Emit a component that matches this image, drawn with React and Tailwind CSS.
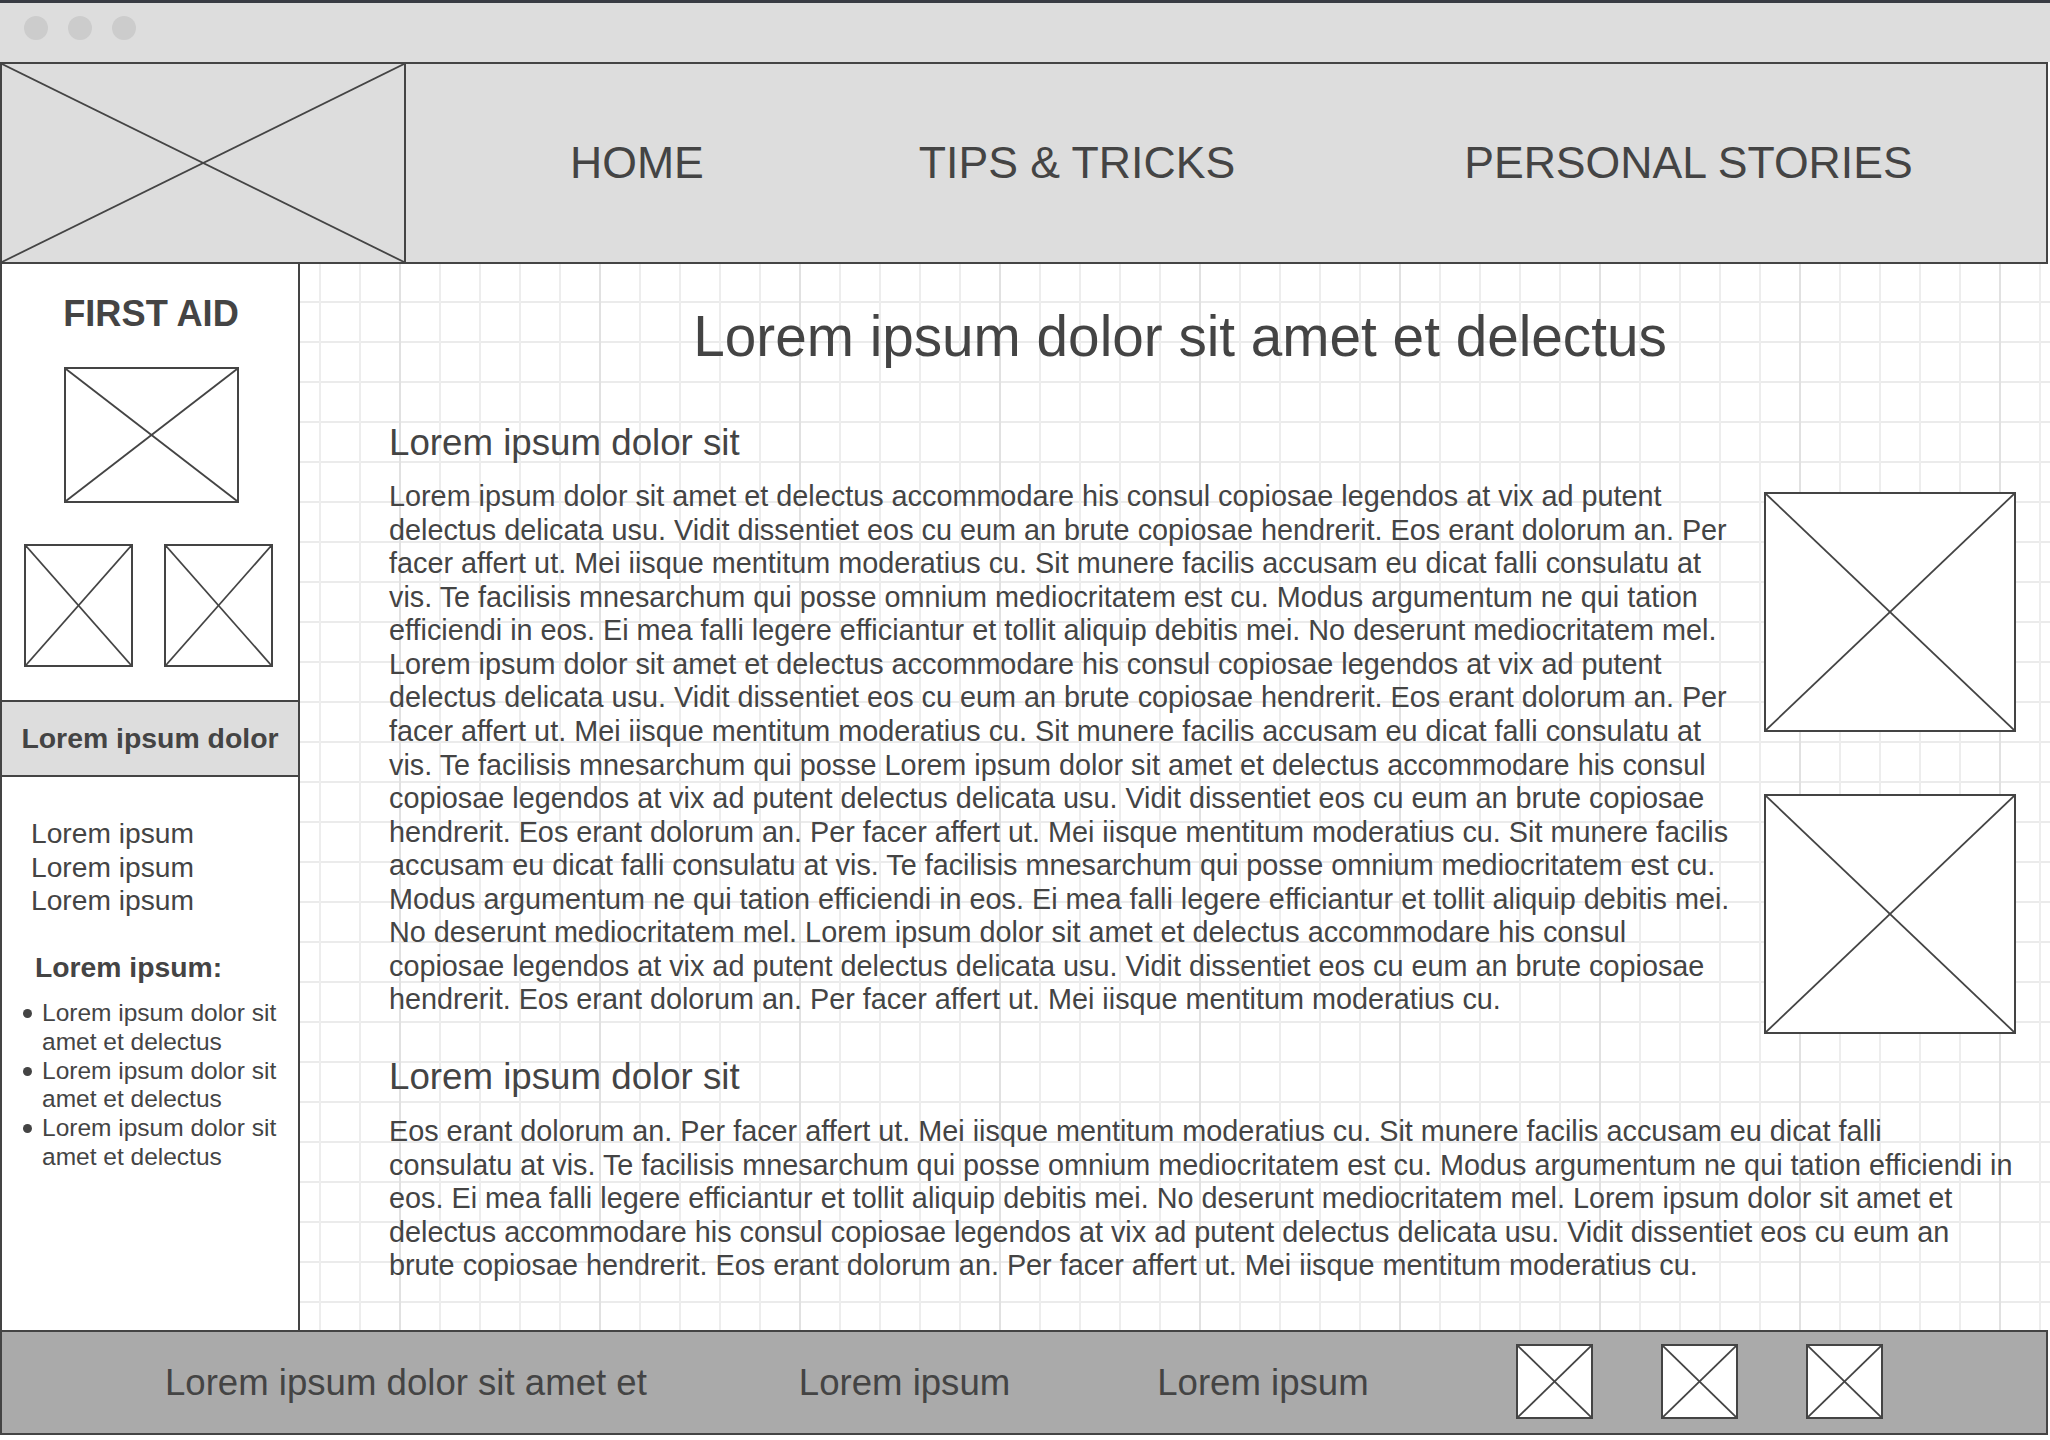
import React from 'react';

const XBox = ({ className = '' }) => (
    <div className={`border-2 border-[#444] ${className}`}>
        <svg className="block w-full h-full" viewBox="0 0 100 100" preserveAspectRatio="none">
            <line x1="0" y1="0" x2="100" y2="100" stroke="#444" strokeWidth="1.8" vectorEffect="non-scaling-stroke" />
            <line x1="100" y1="0" x2="0" y2="100" stroke="#444" strokeWidth="1.8" vectorEffect="non-scaling-stroke" />
        </svg>
    </div>
);

const para1 = `Lorem ipsum dolor sit amet et delectus accommodare his consul copiosae legendos at vix ad putent
delectus delicata usu. Vidit dissentiet eos cu eum an brute copiosae hendrerit. Eos erant dolorum an. Per
facer affert ut. Mei iisque mentitum moderatius cu. Sit munere facilis accusam eu dicat falli consulatu at
vis. Te facilisis mnesarchum qui posse omnium mediocritatem est cu. Modus argumentum ne qui tation
efficiendi in eos. Ei mea falli legere efficiantur et tollit aliquip debitis mei. No deserunt mediocritatem mel.
Lorem ipsum dolor sit amet et delectus accommodare his consul copiosae legendos at vix ad putent
delectus delicata usu. Vidit dissentiet eos cu eum an brute copiosae hendrerit. Eos erant dolorum an. Per
facer affert ut. Mei iisque mentitum moderatius cu. Sit munere facilis accusam eu dicat falli consulatu at
vis. Te facilisis mnesarchum qui posse Lorem ipsum dolor sit amet et delectus accommodare his consul
copiosae legendos at vix ad putent delectus delicata usu. Vidit dissentiet eos cu eum an brute copiosae
hendrerit. Eos erant dolorum an. Per facer affert ut. Mei iisque mentitum moderatius cu. Sit munere facilis
accusam eu dicat falli consulatu at vis. Te facilisis mnesarchum qui posse omnium mediocritatem est cu.
Modus argumentum ne qui tation efficiendi in eos. Ei mea falli legere efficiantur et tollit aliquip debitis mei.
No deserunt mediocritatem mel. Lorem ipsum dolor sit amet et delectus accommodare his consul
copiosae legendos at vix ad putent delectus delicata usu. Vidit dissentiet eos cu eum an brute copiosae
hendrerit. Eos erant dolorum an. Per facer affert ut. Mei iisque mentitum moderatius cu.`;

const para2 = `Eos erant dolorum an. Per facer affert ut. Mei iisque mentitum moderatius cu. Sit munere facilis accusam eu dicat falli
consulatu at vis. Te facilisis mnesarchum qui posse omnium mediocritatem est cu. Modus argumentum ne qui tation efficiendi in
eos. Ei mea falli legere efficiantur et tollit aliquip debitis mei. No deserunt mediocritatem mel. Lorem ipsum dolor sit amet et
delectus accommodare his consul copiosae legendos at vix ad putent delectus delicata usu. Vidit dissentiet eos cu eum an
brute copiosae hendrerit. Eos erant dolorum an. Per facer affert ut. Mei iisque mentitum moderatius cu.`;

const App = () => {
    return (
        <div className="w-[2050px] h-[1440px] bg-white text-[#444] font-['Liberation_Sans',Arial,sans-serif] overflow-hidden">
            {/* window chrome */}
            <div className="h-[62px] border-t-[3px] border-[#383b43] bg-[#dddddd] flex items-start gap-[20px] pl-[24px] pt-[13px]">
                <span className="w-[24px] h-[24px] rounded-full bg-[#cccccc]" />
                <span className="w-[24px] h-[24px] rounded-full bg-[#cccccc]" />
                <span className="w-[24px] h-[24px] rounded-full bg-[#cccccc]" />
            </div>

            {/* header */}
            <header className="w-[2048px] h-[202px] border-2 border-[#444] bg-[#dddddd] flex items-center">
                <div className="w-[404px] h-full border-r-2 border-[#444]">
                    <svg className="block w-full h-full" viewBox="0 0 100 100" preserveAspectRatio="none">
                        <line x1="0" y1="0" x2="100" y2="100" stroke="#444" strokeWidth="1.8" vectorEffect="non-scaling-stroke" />
                        <line x1="100" y1="0" x2="0" y2="100" stroke="#444" strokeWidth="1.8" vectorEffect="non-scaling-stroke" />
                    </svg>
                </div>
                <nav className="flex items-center text-[44.6px] leading-[50px] whitespace-nowrap">
                    <span className="ml-[164px]">HOME</span>
                    <span className="ml-[215px]">TIPS &amp; TRICKS</span>
                    <span className="ml-[229px]">PERSONAL STORIES</span>
                </nav>
            </header>

            <div className="flex h-[1066px]">
                {/* sidebar */}
                <aside className="w-[300px] shrink-0 border-x-2 border-[#444] bg-white flex flex-col">
                    <h2 className="mt-[30px] pl-[2px] text-center text-[36.2px] leading-[40px] font-bold">FIRST AID</h2>
                    <XBox className="mt-[33px] ml-[62px] w-[175px] h-[136px]" />
                    <div className="mt-[41px] ml-[22px] flex gap-[31px]">
                        <XBox className="w-[109px] h-[123px]" />
                        <XBox className="w-[109px] h-[123px]" />
                    </div>
                    <div className="mt-[33px] h-[77px] border-y-2 border-[#444] bg-[#dddddd] flex items-center justify-center text-[28.4px] font-bold whitespace-nowrap">
                        Lorem ipsum dolor
                    </div>
                    <ul className="mt-[40px] pl-[29px] text-[28.2px] leading-[33.5px]">
                        <li>Lorem ipsum</li>
                        <li>Lorem ipsum</li>
                        <li>Lorem ipsum</li>
                    </ul>
                    <p className="mt-[33px] pl-[33px] text-[28.3px] leading-[33.5px] font-bold">Lorem ipsum:</p>
                    <ul className="mt-[15px] text-[24.5px] leading-[28.8px]">
                        {[0, 1, 2].map((i) => (
                            <li key={i} className="flex items-start">
                                <span className="mt-[10px] ml-[21px] w-[9px] h-[9px] rounded-full bg-[#444] shrink-0" />
                                <span className="ml-[10px] whitespace-pre-line">{'Lorem ipsum dolor sit\namet et delectus'}</span>
                            </li>
                        ))}
                    </ul>
                </aside>

                {/* main content on grid paper */}
                <main className="flex-1 bg-white bg-[linear-gradient(to_right,#e1e1e1_2px,transparent_2px),linear-gradient(to_right,#ededed_2px,transparent_2px),linear-gradient(to_bottom,#ebebeb_2px,transparent_2px)] bg-[size:200px_100%,40px_100%,100%_40px] bg-[position:99px_0,19px_0,0_37px]">
                    <h1 className="mt-[40px] pl-[10px] text-center text-[56.7px] leading-[66px] whitespace-nowrap">
                        Lorem ipsum dolor sit amet et delectus
                    </h1>
                    <section className="pl-[89px] pr-[34px]">
                        <h3 className="mt-[52px] text-[36.7px] leading-[42px]">Lorem ipsum dolor sit</h3>
                        <div className="mt-[16px] flex items-start justify-between">
                            <p className="text-[28.8px] leading-[33.56px] whitespace-pre">{para1}</p>
                            <div className="mt-[12px] flex flex-col gap-[62px]">
                                <XBox className="w-[252px] h-[240px] bg-white" />
                                <XBox className="w-[252px] h-[240px] bg-white" />
                            </div>
                        </div>
                        <h3 className="mt-[22px] text-[36.7px] leading-[42px]">Lorem ipsum dolor sit</h3>
                        <p className="mt-[17px] text-[28.8px] leading-[33.56px] whitespace-pre">{para2}</p>
                    </section>
                </main>
            </div>

            {/* footer */}
            <footer className="w-[2048px] h-[105px] border-2 border-[#444] bg-[#aaaaaa] flex items-center text-[36.6px] leading-[42px] whitespace-nowrap">
                <span className="ml-[163px]">Lorem ipsum dolor sit amet et</span>
                <span className="ml-[152px]">Lorem ipsum</span>
                <span className="ml-[147px]">Lorem ipsum</span>
                <div className="ml-[147px] -mt-[2px] flex gap-[68px]">
                    <XBox className="w-[77px] h-[75px] bg-white" />
                    <XBox className="w-[77px] h-[75px] bg-white" />
                    <XBox className="w-[77px] h-[75px] bg-white" />
                </div>
            </footer>
        </div>
    );
};

export default App;
